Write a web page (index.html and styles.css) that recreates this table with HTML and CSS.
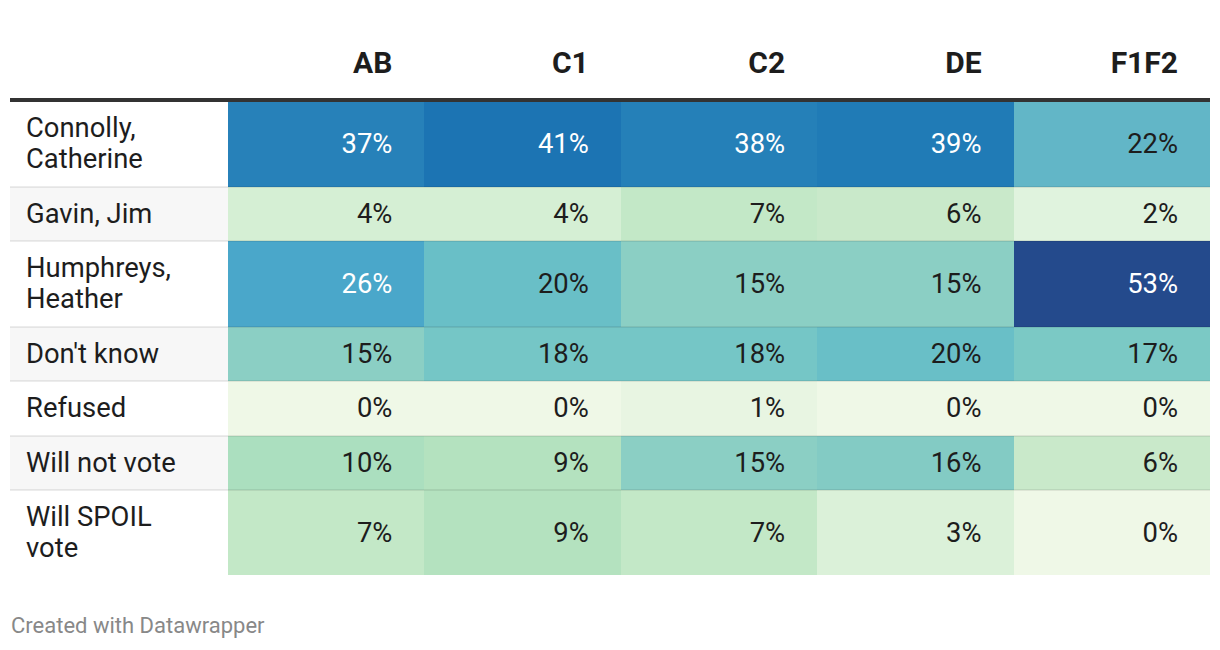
FILE: index.html
```html
<!DOCTYPE html>
<html lang="en">
<head>
<meta charset="utf-8">
<title>Table</title>
<link rel="stylesheet" href="styles.css">
</head>
<body>
<div class="chart">
  <table class="dw-table">
    <colgroup>
      <col class="col-label">
      <col><col><col><col><col>
    </colgroup>
    <thead>
      <tr>
        <th class="label"></th>
        <th>AB</th>
        <th>C1</th>
        <th>C2</th>
        <th>DE</th>
        <th>F1F2</th>
      </tr>
    </thead>
    <tbody>
      <tr>
        <td class="label">Connolly,<br>Catherine</td>
        <td class="num light" style="background:#2781b9">37%</td>
        <td class="num light" style="background:#1c74b3">41%</td>
        <td class="num light" style="background:#2580b8">38%</td>
        <td class="num light" style="background:#207bb6">39%</td>
        <td class="num" style="background:#62b6c7">22%</td>
      </tr>
      <tr class="alt">
        <td class="label">Gavin, Jim</td>
        <td class="num" style="background:#d5efd4">4%</td>
        <td class="num" style="background:#d5efd4">4%</td>
        <td class="num" style="background:#c3e8c7">7%</td>
        <td class="num" style="background:#c9e9ca">6%</td>
        <td class="num" style="background:#e0f3de">2%</td>
      </tr>
      <tr>
        <td class="label">Humphreys,<br>Heather</td>
        <td class="num light" style="background:#4aa7ca">26%</td>
        <td class="num" style="background:#69bfc7">20%</td>
        <td class="num" style="background:#8bcfc4">15%</td>
        <td class="num" style="background:#8bcfc4">15%</td>
        <td class="num light" style="background:#244a8c">53%</td>
      </tr>
      <tr class="alt">
        <td class="label">Don't know</td>
        <td class="num" style="background:#8bcfc4">15%</td>
        <td class="num" style="background:#75c6c6">18%</td>
        <td class="num" style="background:#75c6c6">18%</td>
        <td class="num" style="background:#69bfc7">20%</td>
        <td class="num" style="background:#7bc9c5">17%</td>
      </tr>
      <tr>
        <td class="label">Refused</td>
        <td class="num" style="background:#eff8e7">0%</td>
        <td class="num" style="background:#eff8e7">0%</td>
        <td class="num" style="background:#e8f5e2">1%</td>
        <td class="num" style="background:#eff8e7">0%</td>
        <td class="num" style="background:#eff8e7">0%</td>
      </tr>
      <tr class="alt">
        <td class="label">Will not vote</td>
        <td class="num" style="background:#abdfbf">10%</td>
        <td class="num" style="background:#b4e2bf">9%</td>
        <td class="num" style="background:#8bcfc4">15%</td>
        <td class="num" style="background:#83cbc4">16%</td>
        <td class="num" style="background:#c9e9ca">6%</td>
      </tr>
      <tr>
        <td class="label">Will SPOIL<br>vote</td>
        <td class="num" style="background:#c3e8c7">7%</td>
        <td class="num" style="background:#b4e2bf">9%</td>
        <td class="num" style="background:#c3e8c7">7%</td>
        <td class="num" style="background:#dbf1d9">3%</td>
        <td class="num" style="background:#eff8e7">0%</td>
      </tr>
    </tbody>
  </table>
  <div class="footer">Created with Datawrapper</div>
</div>
</body>
</html>
```

FILE: styles.css
```css
html, body {
  margin: 0;
  padding: 0;
  background: #ffffff;
}

body {
  font-family: Roboto, "Liberation Sans", Arial, sans-serif;
  color: #1d1d1d;
}

.chart {
  padding: 10px 10px 0 10px;
}

.dw-table {
  width: 1200px;
  table-layout: fixed;
  border-collapse: collapse;
  border-spacing: 0;
}

.col-label {
  width: 218px;
}

.dw-table th {
  font-size: 30px;
  font-weight: 700;
  line-height: 36px;
  text-align: right;
  padding: 35px 32px 17px 0;
  border-bottom: 4px solid #333333;
  vertical-align: bottom;
}

.dw-table td {
  font-size: 27.4px;
  line-height: 31px;
  padding: 11px 32px 10.5px 16px;
  border-bottom: 2px solid rgba(0, 0, 0, 0.075);
  vertical-align: middle;
}

.dw-table tbody tr:last-child td {
  border-bottom: none;
}

.dw-table td.label {
  text-align: left;
  background: #ffffff;
}

.dw-table tr.alt td.label {
  background: #f7f7f7;
}

.dw-table td.num {
  text-align: right;
  padding-left: 0;
}

.dw-table td.light {
  color: #ffffff;
}

.footer {
  margin-top: 38px;
  margin-left: 1px;
  font-size: 22px;
  line-height: 26px;
  color: #888888;
}
```
